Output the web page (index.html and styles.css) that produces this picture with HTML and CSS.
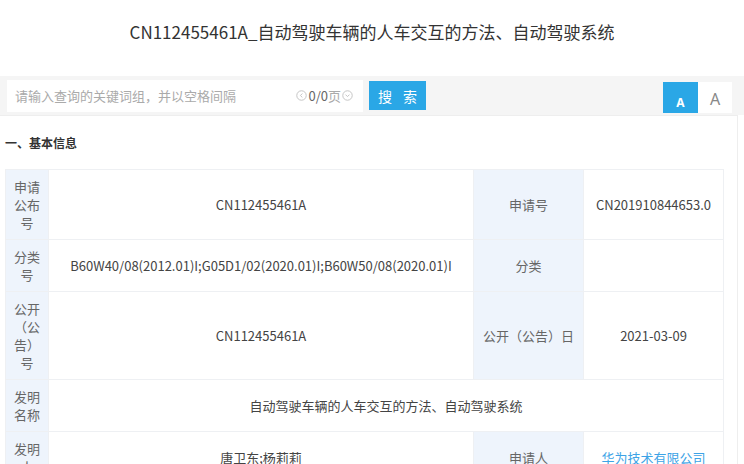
FILE: index.html
```html
<!DOCTYPE html>
<html lang="zh-CN">
<head>
    <meta charset="UTF-8">
    <meta name="viewport" content="width=device-width, initial-scale=1.0">
    <title>CN112455461A_自动驾驶车辆的人车交互的方法、自动驾驶系统</title>
    <link rel="stylesheet" href="styles.css">
</head>
<body>

    <h1 class="title">CN112455461A_自动驾驶车辆的人车交互的方法、自动驾驶系统</h1>

    <div class="toolbar">
        <div class="search-box">
            <span class="placeholder">请输入查询的关键词组，并以空格间隔</span>
            <span class="pager">
                <svg class="pager-icon" width="11" height="11" viewBox="0 0 10 10"><circle cx="5" cy="5" r="4.3" fill="none" stroke="#c4c4c4" stroke-width="0.9"/><path d="M5.8 3.2 L4 5 L5.8 6.8" fill="none" stroke="#c4c4c4" stroke-width="0.9"/></svg>
                <span class="pager-num">0/0</span><span class="pager-unit">页</span>
                <svg class="pager-icon" width="11" height="11" viewBox="0 0 10 10"><circle cx="5" cy="5" r="4.3" fill="none" stroke="#c4c4c4" stroke-width="0.9"/><path d="M3.2 4.2 L5 6 L6.8 4.2" fill="none" stroke="#c4c4c4" stroke-width="0.9"/></svg>
            </span>
        </div>
        <button class="search-btn">搜 索</button>
        <div class="font-switch">
            <span class="size-btn active">A</span>
            <span class="size-btn">A</span>
        </div>
    </div>

    <div class="panel">
        <h2 class="section-title">一、基本信息</h2>
        <table class="info">
            <colgroup>
                <col class="c1">
                <col class="c2">
                <col class="c3">
                <col class="c4">
            </colgroup>
            <tr>
                <th>申请公布号</th>
                <td>CN112455461A</td>
                <th>申请号</th>
                <td>CN201910844653.0</td>
            </tr>
            <tr>
                <th>分类号</th>
                <td>B60W40/08(2012.01)I;G05D1/02(2020.01)I;B60W50/08(2020.01)I</td>
                <th>分类</th>
                <td></td>
            </tr>
            <tr>
                <th>公开（公告）号</th>
                <td>CN112455461A</td>
                <th>公开（公告）日</th>
                <td>2021-03-09</td>
            </tr>
            <tr>
                <th>发明名称</th>
                <td colspan="3">自动驾驶车辆的人车交互的方法、自动驾驶系统</td>
            </tr>
            <tr>
                <th>发明人</th>
                <td>唐卫东;杨莉莉</td>
                <th>申请人</th>
                <td><a class="link" href="#">华为技术有限公司</a></td>
            </tr>
        </table>
    </div>

</body>
</html>
```

FILE: styles.css
```css
body {
    margin: 0;
    font-family: "Noto Sans CJK SC", "Noto Sans", sans-serif;
    color: #444;
    background-color: #fff;
}

.title {
    margin: 0;
    padding-top: 20px;
    font-size: 17px;
    line-height: 24px;
    font-weight: 400;
    color: #333;
    text-align: center;
}

/* 搜索栏 */
.toolbar {
    display: flex;
    align-items: center;
    height: 39px;
    margin-top: 32px;
    padding: 0 12px 0 7px;
    background-color: #f5f5f5;
}

.search-box {
    display: flex;
    align-items: center;
    justify-content: space-between;
    width: 356px;
    height: 32px;
    padding: 0 10px 0 8px;
    box-sizing: border-box;
    background-color: #fff;
}

.placeholder {
    font-size: 13px;
    color: #aaa;
}

.pager {
    display: flex;
    align-items: center;
    font-size: 13px;
}

.pager-num {
    color: #666;
    margin-left: 1px;
}

.pager-unit {
    color: #aaa;
    margin-right: 1px;
}

.search-btn {
    height: 29px;
    width: 57px;
    margin-left: 6px;
    padding: 0 0 0 4px;
    border: none;
    background-color: #2aa7e6;
    color: #fff;
    font-family: inherit;
    font-size: 14px;
    letter-spacing: 4px;
}

.font-switch {
    display: flex;
    margin-left: auto;
    align-self: flex-end;
    margin-bottom: 2px;
}

.size-btn {
    display: flex;
    align-items: center;
    justify-content: center;
    width: 34px;
    height: 31px;
    padding-top: 2px;
    box-sizing: border-box;
    background-color: #fff;
    color: #888;
    font-size: 16px;
    font-family: "Noto Sans", sans-serif;
}

.size-btn.active {
    width: 35px;
    background-color: #2aa7e6;
    color: #fff;
    font-size: 12px;
    font-weight: 700;
    padding-top: 10px;
}

/* 内容 */
.panel {
    margin-right: 6px;
    padding: 18px 14px 20px 5px;
    border-top: 1px solid #eee;
    border-right: 1px solid #eee;
}

.section-title {
    margin: 0 0 17px;
    font-size: 12px;
    line-height: 18px;
    font-weight: 700;
    color: #333;
}

.info {
    width: 718px;
    table-layout: fixed;
    border-collapse: collapse;
    font-size: 13px;
    line-height: 18px;
}

.c1 { width: 43px; }
.c2 { width: 425px; }
.c3 { width: 110px; }
.c4 { width: 140px; }

.info th,
.info td {
    border: 1px solid #eef0f3;
    padding: 7.5px 8px;
    text-align: center;
    font-weight: 400;
    word-break: break-all;
}

.info th {
    background-color: #eef4fc;
    color: #666;
}

.info td {
    color: #444;
}

.link {
    color: #3da3e6;
    text-decoration: none;
}
```
